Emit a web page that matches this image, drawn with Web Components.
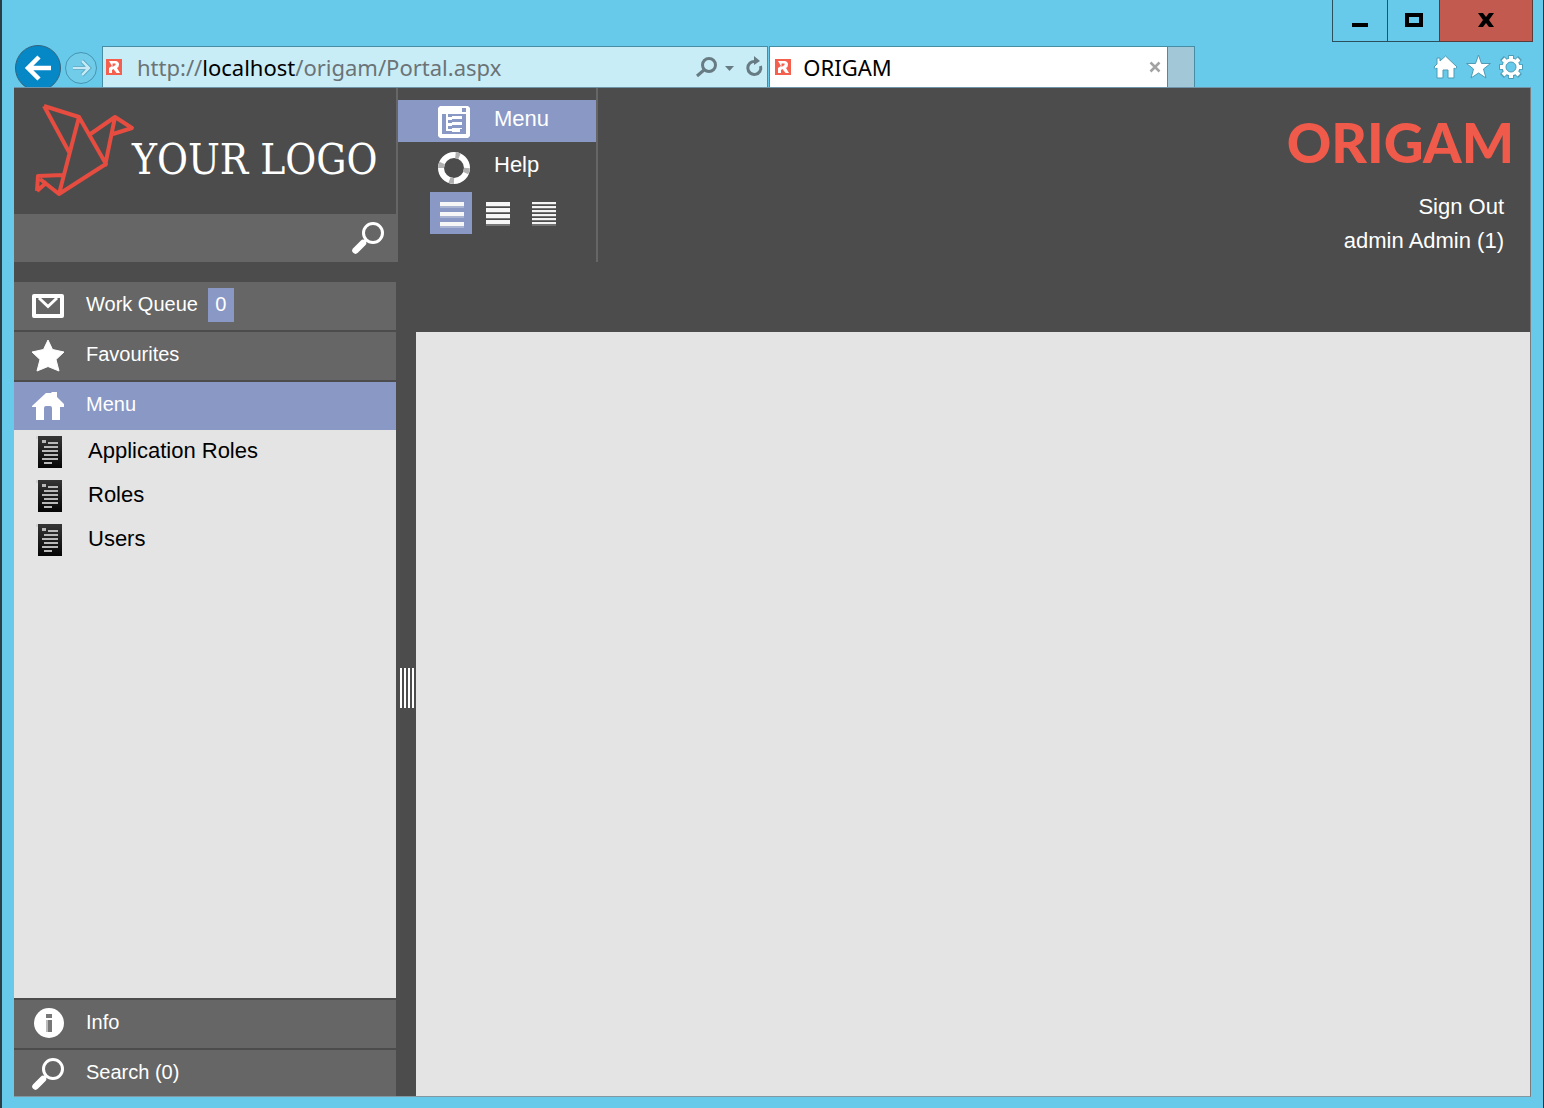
<!DOCTYPE html>
<html lang="en">
<head>
<meta charset="utf-8">
<title>ORIGAM</title>
<style>
  :root { --sky:#67caea; --dark:#4c4c4c; --grey:#666; --accent:#8a98c6; --light:#e4e4e4; --brand:#f05a4a; }
  body { margin:0; font-family:"Liberation Sans",Arial,sans-serif; }
</style>
</head>
<body>
<browser-window>
  <window-controls slot="title"></window-controls>
  <browser-nav slot="nav"></browser-nav>
  <portal-app></portal-app>
</browser-window>
<script>
const base = ':host,*{box-sizing:border-box}button,input{font:inherit;color:inherit;border:0;background:none;padding:0;margin:0;border-radius:0;text-align:left}a{color:inherit;text-decoration:none}svg{display:block}';
function define(name, html) {
  const t = document.createElement('template');
  t.innerHTML = html.replace('<style>', '<style>' + base);
  customElements.define(name, class extends HTMLElement {
    constructor() { super(); this.attachShadow({mode:'open'}).append(t.content.cloneNode(true)); }
  });
}

const icons = {
  mail: ['0 0 32 32', '<path d="M2 6H30V26H2Z" fill="none" stroke="#fff" stroke-width="4" stroke-linejoin="round"/><path d="M7 8L16 16.500L25 8" fill="none" stroke="#fff" stroke-width="3"/>'],
  star: ['0 0 32 32', '<path d="M16 0L20.500 9.500L32 12L24 19.500L27 31L16 26.500L5 31L8 19.500L0 12L11.500 9.500Z" fill="#fff" stroke="#fff" stroke-linejoin="round"/>'],
  home: ['0 0 32 32', '<path d="M0 16L14 3H19L20 2H25V7L32 14V17H28V30H20V18Q20 16 18 16H14Q12 16 12 18V30H4V17H0Z" fill="#fff"/>'],
  doc: ['0 0 32 32', '<defs><linearGradient id="g" x1="0" y1="0" x2="0" y2="1"><stop offset="0" stop-color="#353535"/><stop offset="1" stop-color="#050505"/></linearGradient></defs><path d="M4 0H28V32H4Z" fill="url(#g)"/><path d="M8 4h4v3H8ZM14 6H24v2H14ZM10 10H24v2H10ZM8 14H24v2H8ZM10 18H24v2H10ZM8 22H24v2H8ZM10 26H18v2H10Z" fill="#b8b8b8"/><path d="M2 0h2v3H2Z" fill="#d4d4d4"/>'],
  info: ['0 0 32 32', '<circle cx="17" cy="15" r="15" fill="#fff"/><path d="M14 6H20V10H14ZM14 12H20V24H14Z" fill="#777"/><path d="M14 12H16V24H14Z" fill="#bbb"/>'],
  search: ['0 0 32 32', '<circle cx="21" cy="11" r="9.500" fill="none" stroke="#fff" stroke-width="3"/><path d="M14 18L10 22" stroke="#fff" stroke-width="3"/><path d="M11 21L3.500 28.500" stroke="#fff" stroke-width="6.500" stroke-linecap="round"/>'],
  tree: ['0 0 32 32', '<path d="M2 0H30L32 2V30L30 32H2L0 30V2Z" fill="#fff"/><path d="M4 8H28V28H4Z" fill="#8a98c6"/><path d="M24 2h4v4h-4Z" fill="#8a98c6"/><path d="M8 8h2v3h4v-1h10v3H14v1h-4v3h4v-1h10v3H14v1h-4v3h4v-1h10v1h-2v3H14v-1H8Z" fill="#fff"/>'],
  help: ['0 0 32 32', '<circle cx="16" cy="16" r="13" fill="none" stroke="#fff" stroke-width="6"/><g fill="none" stroke="#b0b0b0" stroke-width="6"><path d="M17.500 3.100A13 13 0 0 1 21.500 4.200M28.900 16A13 13 0 0 1 27.600 21M16 29A13 13 0 0 1 11.500 28M3.100 16A13 13 0 0 1 4.200 11"/></g>'],
  big: ['0 0 24 26', '<path d="M0 0h24v4H0ZM0 10h24v4H0ZM0 20h24v4H0Z" fill="#f6f6f6"/><path d="M0 4h24v2H0ZM0 14h24v2H0ZM0 24h24v2H0Z" fill="#a9b3d2"/>'],
  mid: ['0 0 24 24', '<path d="M0 0h24v4H0ZM0 6h24v4H0ZM0 12h24v4H0ZM0 18h24v4H0Z" fill="#f6f6f6"/><path d="M0 4h24v1H0ZM0 10h24v1H0ZM0 16h24v1H0ZM0 22h24v2H0Z" fill="#777"/>'],
  small: ['0 0 24 24', '<path d="M0 0h24v2H0ZM0 4h24v2H0ZM0 8h24v2H0ZM0 12h24v2H0ZM0 16h24v2H0ZM0 20h24v2H0Z" fill="#f3f3f3"/><path d="M0 2h24v1H0ZM0 6h24v1H0ZM0 10h24v1H0ZM0 14h24v1H0ZM0 18h24v1H0ZM0 22h24v2H0Z" fill="#707070"/>'],
  fav: ['0 0 16 16', '<path d="M0 0H16V16H0Z" fill="#f4604d"/><path d="M3 2H10Q13 2.500 13 5.500Q13 8 11 9L14 14H10.500L7.500 10L6 11V14H3V9L6 7Z" fill="#fff"/><path d="M6.500 4.500H9.500V6L6.500 8Z" fill="#f4604d"/>'],
  bird: ['0 0 104 96', '<g fill="none" stroke="#e64c3f" stroke-width="4" stroke-linejoin="round"><path d="M12 3L47 14L74 61L66 66L27 91L47 14M12 3L37 49M57 32L83 14L100 25L81 31M83 14L73 63M27 91L8 76M5 88L6 73L31 72M5 88L15 79"/></g>']
};
class AppIcon extends HTMLElement {
  connectedCallback() {
    if (this.shadowRoot) return;
    const [box, body] = icons[this.getAttribute('name')];
    this.attachShadow({mode:'open'}).innerHTML = `<style>:host{display:block;flex:none;width:32px;height:32px}svg{display:block;width:100%;height:100%}</style><svg viewBox="${box}" aria-hidden="true">${body}</svg>`;
  }
}
customElements.define('app-icon', AppIcon);

define('browser-window', `<style>
  :host{display:flex;flex-direction:column;height:100vh;background:var(--sky);padding:0 12px 11px 12px;border-left:2px solid #2b3d45;border-right:1px solid #173a48;
    position:relative;overflow:hidden}
  .edge{position:absolute;left:-2px;top:0;bottom:0;width:1px;background:linear-gradient(#fff 72px,#333 72px 80px,#e8e8e8 80px 100px,#999 100px 122px,#0b4a86 122px 136px,#777 136px 152px,#fff 152px 204px,#f4c800 204px 216px,#00b51a 216px 224px,#fff 224px 234px,#0088d6 234px 244px,#00c617 244px 258px,#fff 258px)}
  header{height:88px;flex:none;display:flex;flex-direction:column;justify-content:space-between;border-bottom:1px solid #6f93a8}
  main{flex:1;min-height:0;display:flex;border-right:1px solid #7c7c7c;border-bottom:1px solid #8297a2}
  ::slotted(portal-app){flex:1;min-width:0}
</style><div class="edge"></div><header><slot name="title"></slot><slot name="nav"></slot></header><main><slot></slot></main>`);

define('window-controls', `<style>
  :host{display:flex;justify-content:flex-end;height:42px;margin-right:-2px}
  button{display:grid;place-items:center;border:1px solid #2c4f5d;border-top:0;border-right:0;height:42px}
  .min{width:55px}.max{width:52px}.close{width:94px;background:#c25a50;border-color:#5b3a3c;border-right:1px solid #5b3a3c}
  svg{margin-bottom:2px}
</style>
<button class="min" aria-label="Minimize"><svg width="16" height="14"><path d="M0 10h16v4H0Z"/></svg></button>
<button class="max" aria-label="Maximize"><svg width="18" height="14"><path d="M2 2H16V12H2Z" fill="none" stroke="#000" stroke-width="4"/></svg></button>
<button class="close" aria-label="Close"><svg width="16" height="14"><path d="M0 0H5L8 4L11 0H16L11 7L16 14H11L8 10L5 14H0L5 7Z"/></svg></button>`);

define('browser-nav', `<style>
  :host{display:flex;height:42px;align-items:stretch;overflow:hidden;font-family:"Noto Sans","Open Sans",sans-serif;font-size:22px;line-height:30px}
  .history{width:88px;display:flex;flex:none;align-items:flex-start;gap:3px}
  .addr,.tab{display:flex;align-items:center;min-width:0;border:1px solid #478da4;border-bottom:0;height:41px;margin-top:1px}
  .addr{flex:1 1 666px;background:#c9edf7;padding:0 3px 0 3px}
  .tab{flex:1 1 398px;background:#fff;margin-left:1px;padding:0 6px 0 5px;gap:12px}
  .new{width:27px;background:#a2c8d7;border:1px solid #478da4;border-left:0;border-bottom:0;margin-top:1px}
  .space{flex:1 1 238px}
  .url{flex:1;margin-left:15px;color:#6b7376;white-space:nowrap}.url b{font-weight:400;color:#000}
  .tab span{flex:1}
  app-icon{width:16px;height:16px}
  .tools{display:flex;gap:8px;align-items:center;padding:2px 8px 0 0}
</style>
<div class="history">
<button aria-label="Back"><svg width="48" height="46" viewBox="0 0 48 46"><circle cx="24" cy="23" r="22.500" fill="#0687c6" stroke="#34637c"/><path d="M13 23H37M25 12L14 23L25 34" fill="none" stroke="#fff" stroke-width="4.500"/></svg></button>
<button aria-label="Forward"><svg width="34" height="42" viewBox="0 0 34 42"><circle cx="16" cy="23" r="15.500" fill="#70cce9" stroke="#4694b2"/><path d="M8 23H23M17 16L24 23L17 30" fill="none" stroke="#4b9db8" stroke-width="4"/><path d="M8 23H23M17 16L24 23L17 30" fill="none" stroke="#c5eaf5" stroke-width="2.500"/></svg></button>
</div>
<div class="addr"><app-icon name="fav"></app-icon><div class="url" role="textbox" aria-label="Address">http://<b>localhost</b>/origam/Portal.aspx</div>
<button aria-label="Search the address"><svg width="68" height="22" viewBox="0 0 68 22" fill="none" stroke="#677b82" stroke-width="3"><circle cx="13" cy="9" r="6.500"/><path d="M8 14L1 20"/><path d="M29 10h9l-4.500 5Z" fill="#677b82" stroke="none"/><path d="M59 5.500A6.500 6.500 0 1 0 64.500 10"/><path d="M58 0V9L64 5Z" fill="#677b82" stroke="none"/></svg></button></div>
<div class="tab"><app-icon name="fav"></app-icon><span>ORIGAM</span><button aria-label="Close tab"><svg width="12" height="12" viewBox="0 0 12 12"><path d="M1.500 1.500L10.500 10.500M10.500 1.500L1.500 10.500" stroke="#a2a2a2" stroke-width="2.500"/></svg></button></div>
<button class="new" aria-label="New tab"></button><div class="space"></div>
<div class="tools">
<button aria-label="Home"><svg width="25" height="24" viewBox="0 0 25 24"><path d="M12.500 1L24 12L22.500 14L21 13V23H15V15H10V23H4V13L2.500 14L1 12L4 9V3H7V6Z" fill="#fff" stroke="#4d9bb5"/></svg></button>
<button aria-label="Favorites"><svg width="25" height="24" viewBox="0 0 25 24"><path d="M12.500 0L15.500 8.500H24.500L17.500 14L20 23L12.500 18L5 23L7.500 14L0.500 8.500H9.500Z" fill="#fff" stroke="#4d9bb5"/></svg></button>
<button aria-label="Tools"><svg width="24" height="24" viewBox="0 0 24 24"><g stroke="#4d9bb5" stroke-width="5.500"><path d="M12 0V24M0 12H24M3 3L21 21M21 3L3 21"/></g><circle cx="12" cy="12" r="9.500" fill="#4d9bb5"/><path d="M12 1V23M1 12H23M4 4L20 20M20 4L4 20" stroke="#fff" stroke-width="4"/><circle cx="12" cy="12" r="8.500" fill="#fff"/><circle cx="12" cy="12" r="5" fill="var(--sky)" stroke="#4d9bb5"/></svg></button>
</div>`);

define('nav-item', `<style>
  :host{display:block;background:var(--grey);color:#fff;font-size:20px}
  :host([active]){background:var(--accent)}
  button{display:flex;align-items:center;gap:22px;width:100%;height:48px;padding-left:18px}
  .label{display:flex;align-items:flex-start;gap:10px;height:36px}
  .text{line-height:32px}
  ::slotted(b){font-weight:400;background:var(--accent);width:26px;height:34px;line-height:32px;text-align:center}
</style><button><slot name="icon"></slot><span class="label"><span class="text"><slot></slot></span><slot name="badge"></slot></span></button>`);

define('menu-entry', `<style>
  :host{display:block;font-size:22px;color:#000}
  a{display:flex;align-items:center;gap:22px;height:44px;padding-left:20px}
  .t{padding-bottom:2px}
</style><a href="#"><app-icon name="doc"></app-icon><span class="t"><slot></slot></span></a>`);

define('side-bar', `<style>
  :host{display:flex;flex-direction:column;gap:2px;width:382px;flex:none;margin-top:20px;overflow:hidden}
  .open{flex:1;display:flex;flex-direction:column;min-height:0}
  .list{flex:1;background:var(--light);min-height:0}
  .last{height:46px;overflow:hidden}
</style>
<nav-item><app-icon slot="icon" name="mail"></app-icon>Work Queue<b slot="badge">0</b></nav-item>
<nav-item><app-icon slot="icon" name="star"></app-icon>Favourites</nav-item>
<div class="open"><nav-item active><app-icon slot="icon" name="home"></app-icon>Menu</nav-item>
<div class="list"><menu-entry>Application Roles</menu-entry><menu-entry>Roles</menu-entry><menu-entry>Users</menu-entry></div></div>
<nav-item><app-icon slot="icon" name="info"></app-icon>Info</nav-item>
<nav-item class="last"><app-icon slot="icon" name="search"></app-icon>Search (0)</nav-item>`);

define('brand-panel', `<style>
  :host{display:block;width:384px;flex:none}
  .logo{display:flex;height:126px;border-right:2px solid var(--grey);padding:15px 0 0 18px}
  .logo app-icon{width:104px;height:96px}
  .logo span{font-family:"DejaVu Serif Condensed","DejaVu Serif",serif;font-size:42px;line-height:48px;color:#fff;white-space:nowrap;margin:33px 0 0 -4px}
  form{display:flex;height:48px;background:var(--grey);color:#fff;align-items:center;padding-right:14px}
  input{flex:1;min-width:0;height:48px;padding:0 16px;font-size:20px;outline:0}
</style><div class="logo"><app-icon name="bird"></app-icon><span>YOUR LOGO</span></div>
<form><input type="text" aria-label="Search"><button type="button" aria-label="Search"><app-icon name="search"></app-icon></button></form>`);

define('top-menu', `<style>
  :host{display:block;width:200px;flex:none;border-right:2px solid var(--grey);padding-top:12px;color:#fff;font-size:22px}
  .row{display:flex;align-items:center;gap:24px;width:100%;height:42px;padding:2px 0 0 40px;margin-bottom:4px}
  .row span{padding-bottom:6px}
  .on{background:var(--accent)}
  .sizes{display:flex;gap:4px;padding-left:32px}
  .sizes button{width:42px;height:42px;display:flex;padding:10px 0 0 10px}
  .sizes app-icon{width:24px;height:24px}
  .sizes .on app-icon{height:26px}
</style>
<button class="row on"><app-icon name="tree"></app-icon><span>Menu</span></button>
<button class="row"><app-icon name="help"></app-icon><span>Help</span></button>
<div class="sizes"><button class="on" aria-label="Large rows"><app-icon name="big"></app-icon></button><button aria-label="Medium rows"><app-icon name="mid"></app-icon></button><button aria-label="Small rows"><app-icon name="small"></app-icon></button></div>`);

define('user-panel', `<style>
  :host{display:flex;flex-direction:column;align-items:flex-end;margin-left:auto;color:#fff;font-size:22px;line-height:34px;padding:24px 26px 0 0}
  .brand{font-family:Lato,sans-serif;font-weight:900;font-size:55px;line-height:60px;color:var(--brand);margin:0 -10px 18px 0}
</style><div class="brand">ORIGAM</div><a href="#">Sign Out</a><div>admin Admin (1)</div>`);

define('portal-app', `<style>
  :host{display:flex;flex-direction:column;background:var(--dark);min-height:0}
  header{display:flex;height:174px;flex:none}
  .body{flex:1;display:flex;min-height:0}
  .split{width:20px;display:flex;align-items:center;justify-content:center;padding-top:18px}
  .grip{width:14px;height:40px;margin-left:2px;background:repeating-linear-gradient(90deg,#fff 0 2px,transparent 2px 4px)}
  .work{flex:1;background:var(--light);margin-top:70px}
</style>
<header><brand-panel></brand-panel><top-menu></top-menu><user-panel></user-panel></header>
<div class="body"><side-bar></side-bar><div class="split"><div class="grip"></div></div><div class="work"></div></div>`);
</script>
</body>
</html>
